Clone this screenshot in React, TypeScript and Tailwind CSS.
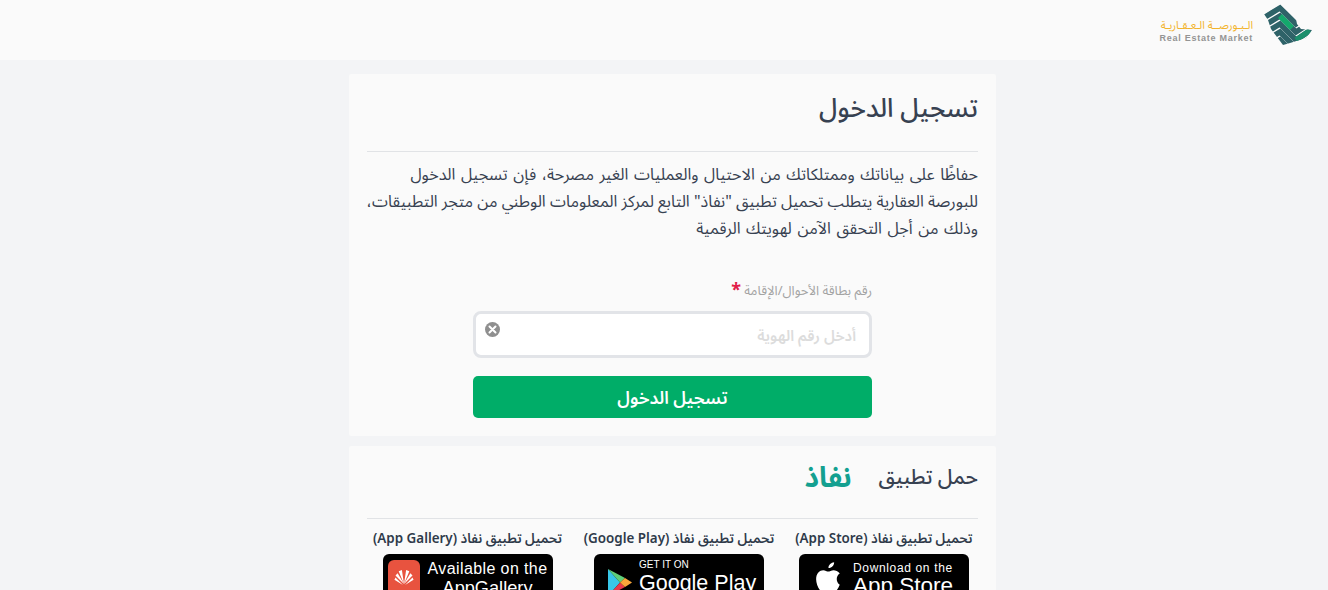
const font = { fontFamily: '"Noto Sans", "Noto Sans Arabic", "DejaVu Sans", sans-serif' };

function Logo() {
  const bands = [0, 1, 2, 3, 4, 5];
  return (
    <div className="flex items-center gap-[7px]" dir="ltr">
      <div className="flex flex-col items-end mt-[13px]">
        <span className="text-[11px] leading-[14px] text-[#f2b32a] whitespace-nowrap" dir="rtl">الـبـورصــة الـعـقـاريـة</span>
        <span className="text-[9px] leading-[13px] font-bold tracking-[0.75px] text-[#949494] font-['Liberation_Sans'] whitespace-nowrap">Real Estate Market</span>
      </div>
      <svg width="52" height="50" viewBox="0 0 52 50" fill="none">
        <clipPath id="map">
          <path d="M4 14 L20 4 L36 19 L37 24 L41 29 L52 30 L46 38 L30 43 L23 45 L20 41 L11 29 L8 20 Z" />
        </clipPath>
        <g clipPath="url(#map)" strokeWidth="5.500">
          {bands.map(k => (
            <polyline key={k} points={`0,${20 + k * 8} 20,${8 + k * 8} 36,${24 + k * 8} 54,${12 + k * 8}`} stroke="#2e6268" />
          ))}
          <polyline points="20,16 32,28" stroke="#14a86c" />
          <polyline points="36,40 50,30.500" stroke="#1b8f6c" />
        </g>
      </svg>
    </div>
  );
}

function Badge({ kind }: { kind: 'apple' | 'google' | 'huawei' }) {
  return (
    <div dir="ltr" className="w-[170px] h-[60px] bg-black rounded-[6px] mx-auto flex items-start text-white overflow-hidden whitespace-nowrap font-['Liberation_Sans']">
      {kind === 'apple' && (
        <div className="flex items-start pl-[16px] pt-[8px] gap-[11px]">
          <svg width="27" height="32" viewBox="0 0 24 28" fill="white">
            <path d="M17 0c.2 2.400-2 5.300-5 5.200C11.700 2.800 14.200.3 17 0zM22 20c-1.300 3-3.400 7-5.800 7-1.500 0-2.200-1-4.200-1s-2.800 1-4.200 1C4.500 27 1 20 1 15c0-5.300 3.300-8 6.300-8 1.800 0 3.300 1.200 4.500 1.200S14.500 7 16.600 7c1.400 0 4 .6 5.400 3-3.800 2.300-3.300 7.900 0 10z" />
          </svg>
          <div className="flex flex-col -mt-[1px]">
            <span className="text-[12px] leading-[14px] tracking-[0.65px]">Download on the</span>
            <span className="text-[22.500px] leading-[26px] -mt-[2px]">App Store</span>
          </div>
        </div>
      )}
      {kind === 'google' && (
        <div className="flex items-start pl-[14px] pt-[5px] gap-[7px]">
          <svg width="24" height="27" viewBox="0 0 24 27" className="mt-[10px]">
            <path d="M0 0 L12 13.500 L0 27 Z" fill="#38c6e8" />
            <path d="M0 0 L17 9 L12 13.500 Z" fill="#5fd07a" />
            <path d="M0 27 L17 18 L12 13.500 Z" fill="#e8394a" />
            <path d="M17 9 L24 13.500 L17 18 L12 13.500 Z" fill="#f9a63a" />
          </svg>
          <div className="flex flex-col">
            <span className="text-[10px] leading-[12px]">GET IT ON</span>
            <span className="text-[21.500px] leading-[26px] -mt-[1px]">Google Play</span>
          </div>
        </div>
      )}
      {kind === 'huawei' && (
        <div className="flex items-start pl-[5px] pt-[6px] gap-[8px]">
          <div className="w-[32px] h-[44px] rounded-[6px] bg-[#e8533f] flex flex-col items-center pt-[9px]">
            <svg width="20" height="17" viewBox="0 0 18 16" fill="white">
              <path d="M9 14 L4 2 L7 1 Z M9 14 L14 2 L11 1 Z M9 14 L1 6 L3 4 Z M9 14 L17 6 L15 4 Z M8 15 L0 10 L1 8 Z M10 15 L18 10 L17 8 Z" />
            </svg>
          </div>
          <div className="flex flex-col items-center">
            <span className="text-[16px] leading-[18px] tracking-[0.4px]">Available on the</span>
            <span className="text-[18.200px] leading-[22px] -mt-[1px]">AppGallery</span>
          </div>
        </div>
      )}
    </div>
  );
}

export default function App() {
  const apps: { label: string; kind: 'apple' | 'google' | 'huawei'; width: string }[] = [
    { label: 'تحميل تطبيق نفاذ (App Store)', kind: 'apple', width: 'w-[177px]' },
    { label: 'تحميل تطبيق نفاذ (Google Play)', kind: 'google', width: 'w-[191px]' },
    { label: 'تحميل تطبيق نفاذ (App Gallery)', kind: 'huawei', width: 'w-[190px]' },
  ];

  return (
    <div dir="rtl" style={font} className="h-screen overflow-hidden bg-[#f3f4f6] text-[#374151]">
      {/* Header */}
      <header className="h-[60px] bg-[#fafafa] flex items-start pr-[16px]">
        <Logo />
      </header>

      <main className="w-[647px] mr-[332px] mt-[14px] flex flex-col gap-[10px]">
        {/* Login card */}
        <section className="h-[362px] bg-[#fafafa] rounded-[2px] px-[18px]">
          <h1 className="h-[78px] pt-[11px] text-[26px] leading-[44px] font-medium border-b border-[#e1e3e6]">تسجيل الدخول</h1>
          <p className="mt-[9px] text-[16.150px] leading-[27px] whitespace-nowrap [word-spacing:1.400px]">
            حفاظًا على بياناتك وممتلكاتك من الاحتيال والعمليات الغير مصرحة، فإن تسجيل الدخول
            <br />
            <span className="[word-spacing:0px]">للبورصة العقارية يتطلب تحميل تطبيق "نفاذ" التابع لمركز المعلومات الوطني من متجر التطبيقات،</span>
            <br />
            وذلك من أجل التحقق الآمن لهويتك الرقمية
          </p>

          <div className="w-[399px] mx-auto mt-[36px]">
            <label className="block text-[13px] leading-[24px] text-[#a3a3a3]">
              رقم بطاقة الأحوال/الإقامة <span className="text-[#e11d48] text-[18px] font-bold leading-[18px] relative top-[1px]">*</span>
            </label>
            <div className="relative mt-[9px]">
              <input
                placeholder="أدخل رقم الهوية"
                className="w-full h-[47px] bg-white border-[3px] border-[#e2e4e8] rounded-[8px] px-[13px] text-[15px] font-semibold outline-none placeholder:text-[#dcdcdc]"
              />
              <span className="absolute left-[12px] top-[11px] w-[15px] h-[15px] rounded-full bg-[#8f8f8f] flex items-center justify-center">
                <svg width="9" height="9" viewBox="0 0 9 9" stroke="white" strokeWidth="2" strokeLinecap="round">
                  <path d="M1.500 1.500 L7.500 7.500 M7.500 1.500 L1.500 7.500" />
                </svg>
              </span>
            </div>
            <button className="w-full h-[42px] mt-[18px] bg-[#00ad68] text-white rounded-[5px] text-[17.500px] font-semibold">
              تسجيل الدخول
            </button>
          </div>
        </section>

        {/* Download card */}
        <section className="bg-[#fafafa] rounded-[2px] px-[18px] pb-[20px]">
          <div className="h-[73px] border-b border-[#e1e3e6] flex items-start gap-[27px] pt-[7px]">
            <span className="text-[20.700px] leading-[46px] font-medium">حمل تطبيق</span>
            <span className="text-[28px] leading-[46px] font-bold text-[#14a090]">نفاذ</span>
          </div>
          <div className="flex justify-center gap-[21px] mt-[8px]">
            {apps.map(a => (
              <div key={a.kind} className={a.width}>
                <p className="text-[13.400px] leading-[22px] font-semibold text-center text-[#2f3a4a] whitespace-nowrap mb-[5px]">{a.label}</p>
                <Badge kind={a.kind} />
              </div>
            ))}
          </div>
        </section>
      </main>
    </div>
  );
}
